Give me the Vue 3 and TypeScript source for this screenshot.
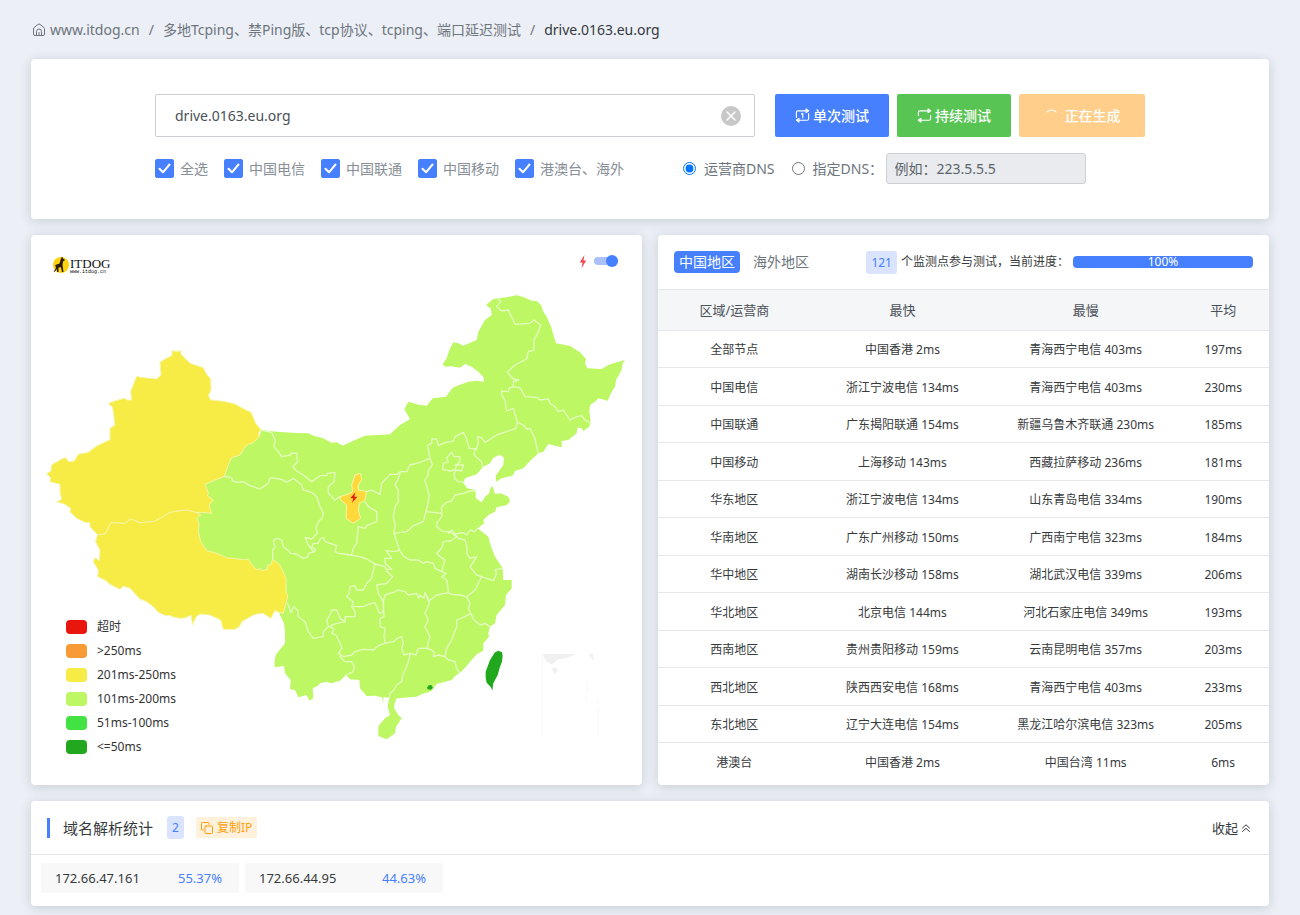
<script setup lang="ts">
import { ref } from 'vue'

interface Row {
  area: string
  fast: string
  slow: string
  avg: string
}

const host = ref('drive.0163.eu.org')
const dnsMode = ref('isp')
const showBolt = ref(true)

const lines = ref([
  { id: 'all', label: '全选', on: true },
  { id: 'ct', label: '中国电信', on: true },
  { id: 'cu', label: '中国联通', on: true },
  { id: 'cm', label: '中国移动', on: true },
  { id: 'sea', label: '港澳台、海外', on: true },
])

const legend = [
  { cls: 'timeout', label: '超时' },
  { cls: 'slow', label: '>250ms' },
  { cls: 'mid', label: '201ms-250ms' },
  { cls: 'good', label: '101ms-200ms' },
  { cls: 'fast', label: '51ms-100ms' },
  { cls: 'best', label: '<=50ms' },
]

const rows: Row[] = [
  { area: '全部节点', fast: '中国香港 2ms', slow: '青海西宁电信 403ms', avg: '197ms' },
  { area: '中国电信', fast: '浙江宁波电信 134ms', slow: '青海西宁电信 403ms', avg: '230ms' },
  { area: '中国联通', fast: '广东揭阳联通 154ms', slow: '新疆乌鲁木齐联通 230ms', avg: '185ms' },
  { area: '中国移动', fast: '上海移动 143ms', slow: '西藏拉萨移动 236ms', avg: '181ms' },
  { area: '华东地区', fast: '浙江宁波电信 134ms', slow: '山东青岛电信 334ms', avg: '190ms' },
  { area: '华南地区', fast: '广东广州移动 150ms', slow: '广西南宁电信 323ms', avg: '184ms' },
  { area: '华中地区', fast: '湖南长沙移动 158ms', slow: '湖北武汉电信 339ms', avg: '206ms' },
  { area: '华北地区', fast: '北京电信 144ms', slow: '河北石家庄电信 349ms', avg: '193ms' },
  { area: '西南地区', fast: '贵州贵阳移动 159ms', slow: '云南昆明电信 357ms', avg: '203ms' },
  { area: '西北地区', fast: '陕西西安电信 168ms', slow: '青海西宁电信 403ms', avg: '233ms' },
  { area: '东北地区', fast: '辽宁大连电信 154ms', slow: '黑龙江哈尔滨电信 323ms', avg: '205ms' },
  { area: '港澳台', fast: '中国香港 2ms', slow: '中国台湾 11ms', avg: '6ms' },
]

const ips = [
  { ip: '172.66.47.161', share: '55.37%' },
  { ip: '172.66.44.95', share: '44.63%' },
]

const mainland =
  'M694 585 740 590 800 594 835 595 850 602 880 610 905 623 920 622 938 632 975 615 1005 602 1080 598 1110 570 1140 553 1123 522 1135 500 1165 509 1190 512 1208 490 1248 485 1268 458 1290 449 1315 440 1340 437 1362 440 1360 426 1345 410 1325 395 1305 387 1290 398 1265 394 1245 395 1238 388 1250 370 1258 345 1270 322 1285 325 1300 332 1340 315 1345 290 1365 255 1385 240 1383 222 1368 210 1390 192 1430 187 1460 181 1480 186 1505 197 1520 198 1533 210 1540 230 1550 245 1565 280 1570 300 1578 325 1620 333 1650 352 1668 372 1665 385 1672 400 1715 402 1735 390 1750 385 1785 375 1778 385 1775 405 1758 435 1755 455 1745 470 1733 497 1705 490 1695 500 1680 510 1678 530 1682 560 1678 575 1660 588 1655 580 1642 578 1640 595 1615 615 1595 618 1595 637 1575 632 1555 627 1540 650 1525 655 1500 678 1480 700 1455 708 1448 722 1415 730 1398 740 1397 722 1420 690 1422 668 1410 659 1390 668 1380 685 1358 697 1340 718 1305 730 1300 745 1312 760 1337 765 1337 790 1355 802 1365 785 1378 775 1380 763 1387 752 1395 777 1412 775 1435 785 1440 800 1430 810 1400 817 1395 830 1375 840 1360 855 1363 865 1343 880 1375 905 1380 925 1385 940 1395 965 1405 980 1418 1000 1420 1035 1445 1035 1445 1060 1428 1080 1425 1110 1400 1140 1395 1165 1380 1175 1375 1195 1377 1205 1360 1225 1360 1247 1340 1258 1325 1275 1305 1298 1290 1313 1275 1323 1265 1335 1220 1347 1205 1367 1195 1372 1175 1377 1160 1385 1100 1390 1094 1405 1092 1420 1105 1440 1115 1450 1098 1475 1095 1495 1070 1513 1045 1503 1045 1473 1065 1450 1080 1440 1073 1415 1078 1388 1060 1387 1060 1405 1056 1387 1035 1382 1010 1383 990 1360 988 1335 960 1333 948 1320 930 1337 905 1345 890 1340 870 1345 863 1353 848 1360 850 1390 838 1397 830 1380 805 1387 795 1365 780 1363 782 1335 765 1315 762 1293 735 1297 733 1285 737 1260 765 1225 765 1190 762 1165 750 1140 740 1100 740 1020 725 985 715 1010 672 1010 650 985 590 975 525 955 495 900 495 845 515 825 520 790 515 750 583 724 600 670 650 630 688 605Z'

const xinjiang =
  'M427 347 438 349 455 348 452 357 468 373 480 385 520 398 530 418 542 432 543 465 535 482 542 495 580 499 615 507 640 521 663 532 678 567 694 585 686 592 688 605 672 622 655 628 642 640 630 660 605 668 595 690 583 724 560 733 525 748 535 773 533 783 550 795 537 810 545 835 515 832 500 833 470 825 430 830 415 835 400 845 370 860 330 863 303 852 285 865 243 863 225 897 203 900 180 875 180 863 165 862 140 850 120 830 122 820 105 808 80 800 95 793 90 770 90 748 60 740 62 728 50 716 63 708 65 690 95 672 108 668 115 680 133 678 145 658 175 652 200 633 240 614 240 580 255 570 248 517 235 505 260 496 285 490 290 495 305 495 302 470 320 423 330 427 380 432 393 420 390 382 405 372 425 362Z'

const tibet =
  'M203 900 225 897 243 863 285 865 303 852 330 863 370 860 400 845 415 835 430 830 470 825 500 833 512 840 500 850 507 865 505 890 512 920 530 947 560 955 590 968 640 974 655 973 663 985 672 997 680 1005 692 1000 695 1007 712 1003 712 990 722 990 728 973 750 990 768 1030 768 1065 773 1085 760 1135 748 1132 735 1127 722 1150 700 1135 685 1136 670 1140 635 1160 628 1175 615 1183 580 1183 572 1155 540 1140 510 1137 498 1145 488 1170 483 1140 468 1148 450 1150 430 1146 415 1140 410 1143 385 1132 370 1115 350 1100 330 1092 300 1060 280 1053 270 1063 240 1048 225 1035 203 1025 205 1005 190 980 195 968 208 977 210 945 197 920Z'

const ningxia =
  'M990 715 975 720 970 735 965 750 968 770 955 777 930 785 932 795 950 810 948 850 970 865 992 850 985 825 988 805 1005 795 1010 770 985 765 985 750 995 735Z'

const borders = [
  'M694 585 725 592 735 615 732 635 745 650 755 665 780 660 785 654 800 655 803 680 788 695 800 708 820 720 845 740 855 733 870 722 890 722 893 715 915 712 912 740 895 755 895 775 915 795 930 785',
  'M583 724 605 728 607 737 620 742 640 740 660 752 690 762 715 745 720 728 755 733 770 742 790 730 815 750 820 765 845 772 860 785 870 815 880 835 877 848 865 860 858 880 862 895 845 912 825 907 835 930 850 950',
  'M728 973 728 945 735 938 730 915 742 910 755 915 760 935 770 943 782 955 800 957 820 970 835 965 835 955 855 950 855 940 845 940 850 925 865 925 870 912 880 907 885 920 900 925 920 932 915 950 925 955 940 957 960 960',
  'M960 960 990 965 1010 972 1035 987 1030 1005 1025 1030 1010 1045 1000 1065 980 1065 975 1052 960 1055 958 1075 950 1085 970 1100 965 1115 975 1130 975 1145 945 1145 945 1160 930 1150 920 1125 905 1125 900 1140 890 1155 895 1175 880 1190 880 1205 850 1210 835 1190 825 1160 805 1145 803 1125 790 1115 783 1133 773 1105',
  'M1035 987 1065 995 1070 1008 1088 1025 1070 1045 1040 1050 1045 1075 1060 1100 1060 1130 1048 1135 1035 1103 1015 1108 1000 1115 970 1115',
  'M1060 1095 1062 1145 1050 1150 1050 1175 1065 1180 1062 1205 1065 1225 1045 1232 1030 1245 1000 1243 975 1250 965 1260 940 1265 925 1255 935 1240 930 1225 918 1200 905 1195 912 1182 900 1175 910 1168 945 1160',
  'M930 1265 945 1280 965 1280 973 1295 970 1310 948 1320',
  'M1065 1225 1090 1220 1102 1210 1115 1205 1120 1225 1115 1240 1122 1260 1140 1255 1138 1270 1130 1295 1118 1320 1115 1340 1100 1350 1092 1365 1080 1375 1078 1388',
  'M1140 1255 1158 1260 1165 1240 1190 1240 1205 1245 1212 1252 1210 1265 1225 1260 1245 1265',
  'M1192 1240 1195 1220 1200 1205 1185 1175 1195 1155 1185 1135 1198 1105 1190 1085',
  'M1060 1100 1065 1080 1090 1072 1105 1065 1125 1070 1135 1080 1160 1075 1166 1090 1170 1080 1182 1090 1185 1073 1198 1097 1220 1080 1255 1073',
  'M1255 1073 1252 1045 1250 1035 1235 1025 1248 1015 1235 1010 1215 1000 1210 985 1190 980 1180 985 1165 975 1140 975 1122 965 1108 945',
  'M1108 945 1095 950 1068 947 1085 970 1065 970 1065 985 1085 1003 1068 1003',
  'M1108 945 1100 920 1092 895 1095 870 1090 845 1095 815 1105 800 1105 765 1095 750 1105 730 1112 710',
  'M1112 710 1130 710 1140 690 1170 682 1200 670 1207 690 1193 710 1195 720 1185 735 1190 755 1197 778 1195 800 1188 830 1180 860 1150 872 1130 890 1092 895',
  'M1112 710 1100 718 1080 718 1055 745 1050 778 1025 765 1010 770',
  'M1005 800 1015 815 1040 830 1040 860 1010 872 1005 880 985 875 980 925 972 935 965 960',
  'M1188 830 1235 835 1235 845 1220 865 1220 875 1240 890 1260 890 1280 905 1262 918 1240 920 1235 940 1220 955 1230 965 1245 975 1235 1010',
  'M1235 835 1235 815 1250 802 1265 798 1275 780 1300 775 1320 768 1337 768',
  'M1255 895 1265 885 1275 897 1300 893 1310 900 1320 885 1335 890 1343 880',
  'M1270 895 1285 910 1305 915 1312 940 1310 955 1320 970 1340 965 1328 985 1320 995 1340 1020 1355 1025 1390 1037 1400 1015 1395 1005 1418 1000',
  'M1355 1025 1335 1065 1310 1085 1290 1080 1265 1078 1255 1073',
  'M1310 1085 1320 1105 1315 1120 1322 1135 1300 1147 1280 1155 1280 1175 1265 1215 1250 1240 1245 1265 1255 1275 1275 1280 1280 1300 1288 1313',
  'M1322 1135 1332 1155 1350 1170 1365 1165 1380 1175',
  'M1200 670 1193 630 1205 625 1205 612 1220 612 1225 632 1245 623 1270 618 1275 605 1300 592 1308 608 1318 640 1340 642 1345 620 1342 605 1355 608 1365 622 1400 600 1458 580 1462 560 1450 520 1430 528 1425 495 1415 480 1415 468 1435 470 1437 460 1450 455 1450 440 1467 435 1450 432 1432 412 1455 390 1490 372 1495 350 1512 345 1512 315 1525 290 1532 270 1512 255 1500 265 1455 268 1435 225 1415 228 1400 215 1412 200 1405 190',
  'M1335 642 1332 660 1355 680 1358 697',
  'M1462 562 1480 570 1490 582 1500 580 1515 610 1520 635 1525 655',
  'M1450 455 1470 458 1485 485 1520 487 1530 495 1555 492 1560 505 1575 515 1585 530 1600 525 1620 555 1640 545 1655 542 1665 555 1680 563',
  'M1265 652 1272 665 1288 665 1290 680 1280 690 1275 705 1260 708 1238 703 1240 685 1255 680 1250 668Z',
  'M1275 690 1300 690 1295 708 1280 705 1272 715 1275 732 1285 740 1303 742',
]
</script>

<template>
  <div class="page">
    <nav class="crumbs" aria-label="breadcrumb">
      <svg class="home" viewBox="0 0 14 14" aria-hidden="true">
        <path d="M1.500 5.500V11q0 1.500 1.500 1.500h8q1.500 0 1.500-1.500V5.500Q12.500 5 12 4.600L8 1.400Q7 .7 6 1.400L2 4.600q-.5.4-.5.9M4.500 12.300V8.500a2.500 2.500 0 0 1 5 0v3.800M7 12V9.500" />
      </svg>
      <a href="#">www.itdog.cn</a>
      <span class="sep">/</span>
      <a href="#">多地Tcping、禁Ping版、tcp协议、tcping、端口延迟测试</a>
      <span class="sep">/</span>
      <span class="here">drive.0163.eu.org</span>
    </nav>

    <form class="card query" @submit.prevent>
      <div class="query-inner">
        <div class="line">
          <div class="host">
            <input v-model="host" type="text" aria-label="域名" />
            <button type="button" class="clear" aria-label="清除" @click="host = ''">
              <svg viewBox="0 0 20 20"><circle cx="10" cy="10" r="10" /><path d="M6 6l8 8M14 6l-8 8" /></svg>
            </button>
          </div>
          <button type="submit" class="btn blue">
            <svg viewBox="0 0 16 16"><path d="M1.500 10V4.500Q1.500 3 3 3h9M14.500 6v5.500q0 1.500-1.500 1.500H4M7 6.500l1.300-.8V10.500" /><path class="tip" d="M12 1l3 2-3 2zM4 11l-3 2 3 2z" /></svg>
            单次测试
          </button>
          <button type="button" class="btn green">
            <svg viewBox="0 0 16 16"><path d="M1.500 8V4.500Q1.500 3 3 3h9M14.500 8v3.500q0 1.500-1.500 1.500H4" /><path class="tip" d="M12 1l3 2-3 2zM4 11l-3 2 3 2z" /></svg>
            持续测试
          </button>
          <button type="button" class="btn orange" disabled>
            <svg viewBox="0 0 16 16"><path d="M3 4.500a6.500 6.500 0 0 1 10 0" /></svg>
            正在生成
          </button>
        </div>
        <div class="line options">
          <label v-for="l in lines" :key="l.id" class="check">
            <input v-model="l.on" type="checkbox" />
            <svg viewBox="0 0 19 19" aria-hidden="true"><path d="M4.500 9.800 8 13.300 14.500 5.500" /></svg>
            <span>{{ l.label }}</span>
          </label>
          <div class="dns">
            <label class="radio"><input v-model="dnsMode" type="radio" value="isp" name="dns" />运营商DNS</label>
            <label class="radio"><input v-model="dnsMode" type="radio" value="custom" name="dns" />指定DNS：</label>
            <input class="dns-ip" type="text" placeholder="例如：223.5.5.5" aria-label="指定DNS" disabled />
          </div>
        </div>
      </div>
    </form>

    <div class="columns">
      <section class="card map-card">
        <svg class="map" viewBox="3 0 1833 1650" role="img" aria-label="中国地图">
          <path class="good" :d="mainland" />
          <path class="mid edge" :d="xinjiang" />
          <path class="mid edge" :d="tibet" />
          <path v-for="(b, i) in borders" :key="i" class="border" :d="b" />
          <path class="hot edge" :d="ningxia" />
          <path class="best" d="M1405 1247 1416 1252 1418 1262 1416 1280 1410 1295 1403 1320 1390 1345 1387 1367 1383 1357 1370 1343 1367 1328 1367 1310 1380 1275 1395 1252Z" />
          <path class="best" d="M1191 1358 1196 1351 1204 1350 1209 1359 1202 1364 1193 1363Z" />
          <path v-if="showBolt" class="bolt" d="M976 772 961 790 970 790 966 804 982 785 973 785Z" />
          <path class="inset-land" d="M1540 1257H1640L1612 1268 1585 1273 1565 1289 1548 1278 1540 1262ZM1565 1302l12-6 8 10-12 10zM1676 1258l12-2 4 24z" />
          <path class="inset" d="M1537 1505V1257M1672 1340v30M1668 1380v20M1705 1390v16M1705 1420v84" />
        </svg>
        <svg class="logo" viewBox="0 0 60 20" role="img" aria-label="ITDOG">
          <circle cx="9" cy="10" r="8" />
          <path d="M1.500 17 4 13 3.200 10 7.500 8.500 9 3.500 10 1.500 11 3.500 13 5 11 6.500 10.500 10 11.500 17H10L9 12.200 6.500 12.500 6.500 17 5 17 5 14 3 16.500Z" />
          <text class="name" x="18" y="13">ITDOG</text>
          <text class="site" x="18" y="18">www.itdog.cn</text>
        </svg>
        <label class="switch">
          <svg viewBox="0 0 8 14" aria-hidden="true"><path d="M5.500 0 .5 8h3L2.500 14l5-8h-3z" /></svg>
          <input v-model="showBolt" type="checkbox" role="switch" aria-label="闪电标记" />
        </label>
        <ul class="legend">
          <li v-for="g in legend" :key="g.cls"><i :class="g.cls"></i>{{ g.label }}</li>
        </ul>
      </section>

      <section class="card stats">
        <header class="stats-head">
          <button type="button" class="tab active">中国地区</button>
          <button type="button" class="tab">海外地区</button>
          <div class="progress-line">
            <span class="badge">121</span>
            <span class="note">个监测点参与测试，当前进度：</span>
            <div class="progress">100%</div>
          </div>
        </header>
        <table>
          <thead>
            <tr><th>区域/运营商</th><th>最快</th><th>最慢</th><th>平均</th></tr>
          </thead>
          <tbody>
            <tr v-for="r in rows" :key="r.area">
              <td>{{ r.area }}</td><td>{{ r.fast }}</td><td>{{ r.slow }}</td><td>{{ r.avg }}</td>
            </tr>
          </tbody>
        </table>
      </section>
    </div>

    <section class="card resolve">
      <header class="resolve-head">
        <h2>域名解析统计</h2>
        <span class="badge small">2</span>
        <button type="button" class="copy">
          <svg viewBox="0 0 12 12" aria-hidden="true"><rect x="4" y="4" width="7.500" height="7.500" rx="1" /><path d="M2.500 8H1.500q-1 0-1-1V1.500q0-1 1-1H7q1 0 1 1V2.500" /></svg>
          复制IP
        </button>
        <button type="button" class="fold">
          收起
          <svg viewBox="0 0 8 8" aria-hidden="true"><path d="M.5 4 4 .8 7.500 4M.5 7.500 4 4.300 7.500 7.500" /></svg>
        </button>
      </header>
      <ul class="ips">
        <li v-for="p in ips" :key="p.ip"><span>{{ p.ip }}</span><b>{{ p.share }}</b></li>
      </ul>
    </section>
  </div>
</template>

<style>
body {
  background: #eceff6;
}
</style>

<style scoped>
.page {
  padding: 20px 31px 9px;
  font: 14px/20px "Noto Sans", "Noto Sans CJK SC", sans-serif;
  color: #373a3c;
}
.page * {
  box-sizing: border-box;
}
button,
input {
  font: inherit;
}
button {
  border: 0;
  padding: 0;
  background: none;
  color: inherit;
  cursor: pointer;
}
ul {
  list-style: none;
  margin: 0;
  padding: 0;
}
svg {
  fill: none;
  stroke-linecap: round;
  stroke-linejoin: round;
}
.card {
  background: #fff;
  border-radius: 4px;
  box-shadow: 0 2px 12px rgba(40, 50, 60, 0.18);
}
.crumbs {
  display: flex;
  align-items: center;
  height: 20px;
  margin-bottom: 19px;
  white-space: nowrap;
  color: #6c757d;
}
.crumbs a {
  color: #6c757d;
  text-decoration: none;
}
.home {
  width: 14px;
  height: 14px;
  margin: 0 4px 0 1px;
  stroke: #6c757d;
}
.sep {
  margin: 0 9px;
}
.here {
  color: #343a40;
}
.query {
  padding: 35px 20px;
}
.query-inner {
  max-width: 990px;
  margin: 0 auto;
}
.line {
  display: flex;
  align-items: center;
  gap: 8px;
}
.host {
  position: relative;
  flex: 1;
  margin-right: 12px;
}
.host input {
  display: block;
  width: 100%;
  height: 43px;
  padding: 0 40px 0 19px;
  border: 1px solid #ccced2;
  border-radius: 2px;
  color: #495057;
}
.clear {
  position: absolute;
  top: 12px;
  right: 14px;
  width: 20px;
  height: 20px;
}
.clear svg {
  display: block;
}
.clear circle {
  fill: #c8c8c8;
}
.clear path {
  stroke: #fff;
  stroke-width: 1.5;
}
.btn {
  display: flex;
  align-items: center;
  justify-content: center;
  gap: 3px;
  width: 114px;
  height: 43px;
  border-radius: 2px;
  color: #fff;
  font-weight: 500;
}
.btn svg {
  width: 15px;
  height: 15px;
  stroke: #fff;
  stroke-width: 1.2;
}
.btn .tip {
  fill: #fff;
  stroke-width: 1;
}
.blue {
  background: #4680ff;
}
.green {
  background: #58c454;
}
.orange {
  width: 126px;
  gap: 6px;
  background: #ffce8a;
}
.options {
  gap: 16px;
  height: 31px;
  margin-top: 16px;
  color: #868e96;
  white-space: nowrap;
}
.check {
  position: relative;
  display: flex;
  align-items: center;
  gap: 6px;
}
.check input {
  appearance: none;
  width: 19px;
  height: 19px;
  margin: 0;
  border: 1px solid #4680ff;
  border-radius: 2px;
}
.check input:checked {
  background: #4680ff;
}
.check svg {
  position: absolute;
  left: 0;
  width: 19px;
  height: 19px;
  stroke: #fff;
  stroke-width: 2;
  pointer-events: none;
}
.dns {
  display: flex;
  align-items: center;
  flex: 1;
  margin-left: 43px;
  color: #6c757d;
}
.radio {
  display: flex;
  align-items: center;
  margin-right: 17px;
}
.radio + .radio {
  width: 86px;
  margin-right: 8px;
}
.radio input {
  width: 13px;
  height: 13px;
  margin: 0 8px 0 0;
}
.dns-ip {
  width: 200px;
  height: 31px;
  padding: 0 8px;
  border: 1px solid #ccd0d5;
  border-radius: 3px;
  background: #e9ebef;
}
.dns-ip::placeholder {
  color: #5c636a;
}
.columns {
  display: grid;
  grid-template-columns: 1fr 1fr;
  gap: 16px;
  margin: 16px 0;
}
.map-card {
  position: relative;
}
.map {
  display: block;
  width: 100%;
}
.map .good {
  fill: #bdf763;
}
.map .mid {
  fill: #f6ec45;
}
.map .hot {
  fill: #ffd93b;
}
.map .best {
  fill: #22a81f;
}
.map .bolt {
  fill: #e0200c;
}
.edge {
  stroke: #f6f5a8;
  stroke-width: 3;
}
.border {
  stroke: #e5fcc0;
  stroke-width: 4;
}
.inset-land {
  fill: #f0f0f0;
}
.inset {
  stroke: #f5f5f5;
  stroke-width: 2;
}
.logo {
  position: absolute;
  top: 20px;
  left: 21px;
  width: 60px;
  height: 20px;
}
.logo circle {
  fill: #fdd20e;
}
.logo path {
  fill: #2b1c10;
}
.logo text {
  fill: #111;
  font-family: "Liberation Serif", serif;
}
.logo .name {
  font-size: 13px;
}
.logo .site {
  font-family: "Liberation Mono", monospace;
  font-size: 5px;
}
.switch {
  position: absolute;
  top: 19px;
  right: 23px;
  display: flex;
  align-items: center;
  gap: 7px;
}
.switch svg {
  width: 8px;
  height: 13px;
  fill: #f0494f;
}
.switch input {
  position: relative;
  appearance: none;
  width: 25px;
  height: 14px;
  margin: 0;
}
.switch input::before {
  content: "";
  position: absolute;
  top: 3px;
  left: 0;
  width: 24px;
  height: 8px;
  border-radius: 4px;
  background: #a9c0fb;
}
.switch input::after {
  content: "";
  position: absolute;
  top: 1px;
  left: 0;
  width: 12px;
  height: 12px;
  border-radius: 50%;
  background: #4680ff;
}
.switch input:checked::after {
  left: 12px;
}
.legend {
  position: absolute;
  left: 35px;
  bottom: 26px;
  font-size: 12px;
  color: #333;
}
.legend li {
  display: flex;
  align-items: center;
  gap: 10px;
  height: 24px;
}
.legend i {
  width: 21px;
  height: 14px;
  border-radius: 4px;
}
.legend .timeout {
  background: #e8160d;
}
.legend .slow {
  background: #f89a36;
}
.legend .mid {
  background: #f6ec45;
}
.legend .good {
  background: #bdf763;
}
.legend .fast {
  background: #41e241;
}
.legend .best {
  background: #22a81f;
}
.stats-head {
  display: flex;
  align-items: center;
  height: 54px;
  padding: 0 16px;
  white-space: nowrap;
}
.tab {
  height: 22px;
  margin-right: 8px;
  padding: 0 5px;
  border-radius: 4px;
  color: #6c757d;
}
.tab.active {
  background: #4680ff;
  color: #fff;
}
.progress-line {
  display: flex;
  align-items: center;
  margin-left: auto;
  font-size: 12px;
}
.badge {
  height: 23px;
  padding: 0 5px;
  border-radius: 3px;
  background: #dae4ff;
  color: #4680ff;
  font-size: 12px;
  line-height: 23px;
}
.note {
  margin: 0 4px;
}
.progress {
  width: 180px;
  height: 12px;
  border-radius: 4px;
  background: #4680ff;
  color: #fff;
  line-height: 12px;
  text-align: center;
}
table {
  width: 100%;
  border-collapse: collapse;
  table-layout: fixed;
  text-align: center;
  font-size: 12px;
}
th {
  height: 41px;
  padding: 0;
  border-top: 1px solid #e6e9ec;
  border-bottom: 1px solid #e6e9ec;
  background: #f5f6f8;
  font-size: 13px;
  font-weight: 400;
  color: #495057;
}
th:nth-child(1) {
  width: 25%;
}
th:nth-child(2),
th:nth-child(3) {
  width: 30%;
}
th:nth-child(4) {
  width: 15%;
}
td {
  height: 37px;
  padding: 2px 0 0;
  border-bottom: 1px solid #e6e9ec;
}
tr:nth-child(even) td {
  height: 38px;
}
tr:last-child td {
  border-bottom: 0;
}
.resolve-head {
  display: flex;
  align-items: center;
  height: 54px;
  padding: 0 19px 0 16px;
  border-bottom: 1px solid #e6e9ec;
}
h2 {
  margin: 0 14px 0 0;
  padding-left: 13px;
  border-left: 3px solid #4680ff;
  font-size: 15px;
  font-weight: 400;
  line-height: 20px;
}
.copy {
  display: flex;
  align-items: center;
  gap: 4px;
  height: 21px;
  margin-left: 12px;
  padding: 0 5px;
  border-radius: 2px;
  background: #fff1dc;
  color: #ff9f0e;
  font-size: 12px;
}
.copy svg {
  width: 12px;
  height: 12px;
  stroke: #ff9f0e;
}
.fold {
  display: flex;
  align-items: center;
  gap: 4px;
  margin-left: auto;
  font-size: 13px;
}
.fold svg {
  width: 8px;
  height: 8px;
  stroke: #373a3c;
}
.ips {
  display: flex;
  gap: 6px;
  padding: 8px 10px 13px;
  font-size: 13px;
}
.ips li {
  display: flex;
  align-items: center;
  width: 198px;
  height: 30px;
  padding: 0 14px;
  border-radius: 2px;
  background: #f8f8f8;
}
.ips span {
  width: 123px;
}
.ips b {
  font-weight: 400;
  color: #4680ff;
}
</style>
